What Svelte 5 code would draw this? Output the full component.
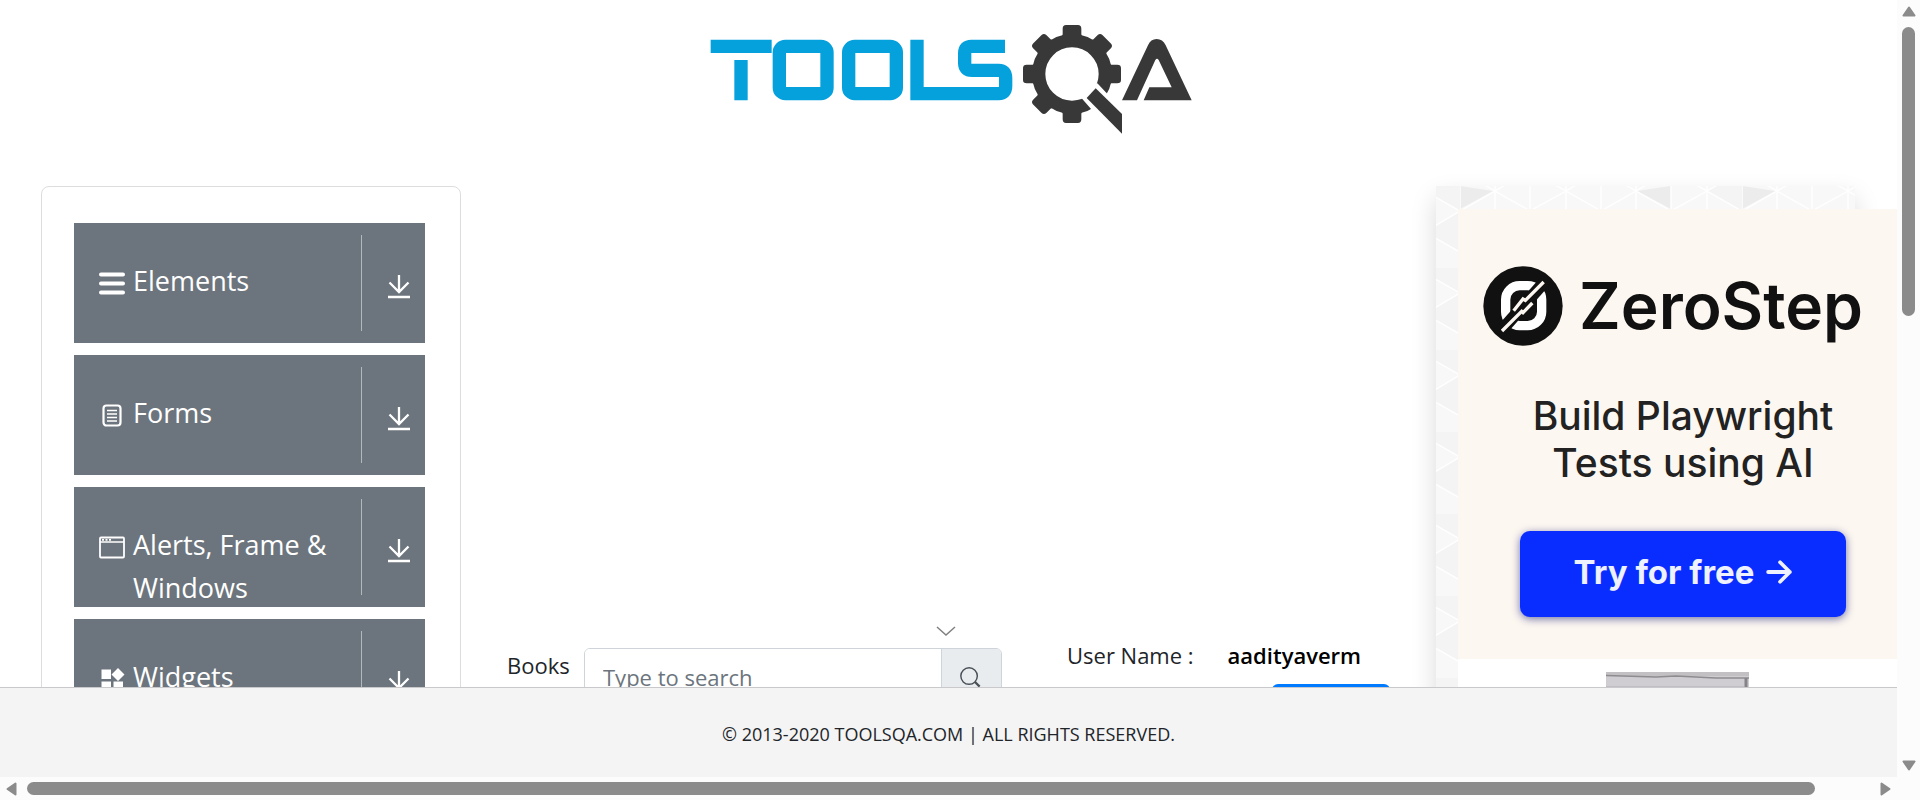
<script>
  const groups = [
    { icon: 'menu', label: 'Elements' },
    { icon: 'form', label: 'Forms' },
    { icon: 'window', label: 'Alerts, Frame & Windows' },
    { icon: 'widgets', label: 'Widgets' },
  ];
  const teeth = [0, 45, 90, 180, 225, 270, 315];
  let query = $state('');
</script>

<div class="shell">
  <div class="page">
    <header>
      <a href="#home" aria-label="TOOLSQA">
        <svg class="logo" viewBox="0 0 1560 420">
          <g fill="none" stroke="#05a1dd" stroke-width="40">
            <path d="M62 109H245M153 150V271" />
            <rect x="268" y="109" width="143" height="142" rx="18" />
            <rect x="476" y="109" width="143" height="142" rx="18" />
            <path d="M945 109H844Q824 109 824 129V160Q824 181 846 181H926Q947 181 947 204V228Q947 251 926 251H681V89" />
          </g>
          <g fill="#383838">
            <g transform="translate(1146 192)">
              <circle r="100" fill="none" stroke="#383838" stroke-width="40" />
              {#each teeth as angle}
                <path transform="rotate({angle})" d="M-40 -108Q-29 -111 -28 -119V-136Q-28 -147 -18 -147H18Q28 -147 28 -136V-119Q29 -111 40 -108Z" />
              {/each}
            </g>
            <path fill="#fff" d="M1222 220L1290 292L1250 350L1175 265L1190 240Z" />
            <path d="M1217 235L1296 312V371L1190 264Z" />
            <path d="M1296 271L1374 106Q1382 87 1400 87Q1418 87 1427 106L1505 271H1361L1378 232H1445L1406 150Q1401 143 1396 150L1341 271Z" />
          </g>
        </svg>
      </a>
    </header>

    <main>
      <nav>
        {#each groups as group}
          <button class="group">
            <span class="group-icon">
              <svg viewBox="0 0 26 26" fill="none" stroke="#fff">
                {#if group.icon === 'menu'}
                  <path d="M2 3.500H24M2 12.500H24M2 21.500H24" stroke-width="4" stroke-linecap="round" />
                {:else if group.icon === 'form'}
                  <rect x="4.500" y="2.500" width="17" height="20" rx="3" stroke-width="2.200" />
                  <path d="M8 7.500H18M8 11H18M8 14.500H18M8 18H18" stroke-width="1.300" />
                {:else if group.icon === 'window'}
                  <rect x="1" y="2.500" width="24" height="20" rx="1" stroke-width="1.800" />
                  <path d="M1 7H25" stroke-width="1.500" />
                  <path d="M3 4.800H13" stroke-width="1.800" stroke-dasharray="2 1.500" />
                {:else}
                  <path d="M2.500 2.500H12V12H2.500ZM2.500 14.500H12V24H2.500ZM14.500 14.500H24V24H14.500ZM19 1L25.500 7.500L19 14L12.500 7.500Z" fill="#fff" stroke="none" />
                {/if}
              </svg>
            </span>
            <span class="group-label">{group.label}</span>
            <span class="group-toggle">
              <svg viewBox="0 0 24 26" fill="none" stroke="#fff" stroke-width="2.300">
                <path d="M12 1V18M2.500 8.500L12 18L21.500 8.500M1 23H23" />
              </svg>
            </span>
          </button>
        {/each}
      </nav>

      <section class="content">
        <div class="books">
          <svg class="chevron" viewBox="0 0 20 10" fill="none" stroke="#808080" stroke-width="1.500">
            <path d="M1 1L10 9L19 1" />
          </svg>
          <div class="search-row">
            <label for="search">Books</label>
            <div class="search">
              <input id="search" type="text" placeholder="Type to search" bind:value={query} />
              <button aria-label="Type to search">
                <svg viewBox="0 0 24 24" fill="none" stroke="#495057" stroke-width="1.600">
                  <circle cx="11" cy="11" r="9" />
                  <path d="M17.500 17.500L22.500 22.500" stroke-width="2.500" />
                </svg>
              </button>
            </div>
          </div>
        </div>
        <div class="user">
          <div class="user-row">
            <span>User Name :</span>
            <strong>aadityaverm</strong>
          </div>
          <button class="primary"></button>
        </div>
      </section>

      <aside>
        <svg class="pattern" width="100%" height="100%" aria-hidden="true">
          <defs>
            <pattern id="facets" x="24" y="0" width="282" height="82" patternUnits="userSpaceOnUse">
              <rect width="282" height="82" fill="#f8f8f8" />
              <path d="M0 0L33 5L0 23ZM211 0V23L177 5Z" fill="#ececec" />
              <path d="M247 5L282 -15V25ZM247 46L282 26V66Z" fill="#f4f4f4" />
              <g stroke="#fff" stroke-width="1.500" fill="none">
                <path d="M0 0V82M35 0V82M70 0V82M106 0V82M141 0V82M176 0V82M211 0V82M247 0V82" />
                <path d="M0 25L35 5L70 25L106 5L141 25L176 5L211 25L247 5L282 25M0 -15L35 5L70 -15L106 5L141 -15L176 5L211 -15L247 5L282 -15" />
                <path d="M0 66L35 46L70 66L106 46L141 66L176 46L211 66L247 46L282 66M0 25L35 46L70 25L106 46L141 25L176 46L211 25L247 46L282 25" />
              </g>
            </pattern>
          </defs>
          <rect width="100%" height="100%" fill="url(#facets)" />
        </svg>
        <div class="ads">
          <article class="ad">
            <div class="brand">
              <svg viewBox="38 50 240 240">
                <circle cx="158" cy="170" r="119" fill="#111" />
                <rect x="106" y="109" width="108" height="120" rx="42" fill="none" stroke="#fff" stroke-width="28" />
                <path d="M84 254L230 89" stroke="#111" stroke-width="36" />
                <path d="M95 245L154 186L158 190L186 161M220 98L165 153L158 149L130 184" fill="none" stroke="#fdf7f1" stroke-width="10" />
              </svg>
              <span>ZeroStep</span>
            </div>
            <p>Build Playwright<br />Tests using AI</p>
            <a class="cta" href="#try">
              Try for free
              <svg viewBox="0 0 24 24" fill="none" stroke="#eef1ff" stroke-width="3.500" stroke-linecap="round" stroke-linejoin="round">
                <path d="M2 12H22M13 3L22 12L13 21" />
              </svg>
            </a>
          </article>
          <svg class="poster" viewBox="0 0 143 120">
            <rect width="143" height="120" fill="#cfccd2" />
            <path d="M0 0H143V4H0Z" fill="#c2c0c3" />
            <path d="M0 3.500L50 5L70 4L110 6L143 6" fill="none" stroke="#8e8c8f" stroke-width="1.500" />
            <path d="M0 15H138" stroke="#b2afb6" />
            <path d="M140 6V120" stroke="#858387" stroke-width="3" />
          </svg>
        </div>
      </aside>
    </main>
  </div>

  <footer>© 2013-2020 TOOLSQA.COM | ALL RIGHTS RESERVED.</footer>

  <div class="bar vertical">
    <svg viewBox="0 0 14 11"><path d="M7 1.500L12.500 9.500H1.500Z" /></svg>
    <div class="track"><div class="thumb"></div></div>
    <svg viewBox="0 0 14 11"><path d="M7 9.500L12.500 1.500H1.500Z" /></svg>
  </div>
  <div class="bar horizontal">
    <svg viewBox="0 0 11 14"><path d="M1.500 7L9.500 1.500V12.500Z" /></svg>
    <div class="track"><div class="thumb"></div></div>
    <svg viewBox="0 0 11 14"><path d="M9.500 7L1.500 1.500V12.500Z" /></svg>
  </div>
</div>

<style>
  * {
    box-sizing: border-box;
  }
  svg {
    display: block;
  }
  button {
    font: inherit;
    border: 0;
    padding: 0;
    cursor: pointer;
  }
  .shell {
    display: grid;
    grid-template-columns: minmax(0, 1fr) 23px;
    grid-template-rows: minmax(0, 1fr) auto 23px;
    height: 100vh;
    background: #fff;
    color: #212529;
    font: 22px/36px 'Open Sans', 'Noto Sans', sans-serif;
  }
  .page {
    overflow: hidden;
  }
  header {
    display: flex;
    justify-content: center;
    padding: 10px 0 36px 2px;
  }
  .logo {
    width: 520px;
    height: 140px;
  }
  main {
    display: grid;
    grid-template-columns: minmax(0, 420fr) minmax(0, 975fr) minmax(0, 419fr);
    padding: 0 42px 0 41px;
  }
  nav {
    display: flex;
    flex-direction: column;
    gap: 12px;
    padding: 36px 35px 36px 32px;
    border: 1px solid #ddd;
    border-radius: 8px;
  }
  .group {
    display: grid;
    grid-template-columns: 26px minmax(0, 1fr) 64px;
    grid-template-rows: minmax(0, 1fr);
    column-gap: 8px;
    height: 120px;
    padding: 12px 0 12px 25px;
    background: #6c757d;
    color: #fff;
    font-size: 27px;
    line-height: 43px;
    text-align: left;
  }
  .group-icon {
    padding-top: 36px;
  }
  .group-icon svg {
    width: 26px;
    height: 26px;
  }
  .group-label {
    padding-top: 24px;
  }
  .group-toggle {
    display: flex;
    justify-content: center;
    padding: 39px 0 0 10px;
    border-left: 1px solid #b4b8bc;
  }
  .group-toggle svg {
    width: 24px;
    height: 26px;
  }
  .content {
    display: grid;
    grid-template-columns: minmax(0, 495fr) minmax(0, 323fr);
    column-gap: 65px;
    align-content: start;
    padding: 440px 46px 0;
  }
  .chevron {
    width: 20px;
    height: 10px;
    margin: 0 46px 12px auto;
  }
  .search-row {
    display: flex;
    gap: 12px;
  }
  label {
    min-width: 65px;
    line-height: 34px;
  }
  .search {
    display: flex;
    flex: 1;
    min-width: 0;
    height: 57px;
    border: 1px solid #ced4da;
    border-radius: 6px;
    overflow: hidden;
  }
  input {
    flex: 1;
    min-width: 0;
    padding: 0 18px;
    border: 0;
    background: #fff;
    color: #495057;
    font: inherit;
  }
  input::placeholder {
    color: #6c757d;
    opacity: 1;
  }
  .search button {
    display: grid;
    place-items: center;
    width: 60px;
    padding-right: 4px;
    border-left: 1px solid #ced4da;
    background: #e9ecef;
  }
  .search button svg {
    width: 22px;
    height: 22px;
  }
  .user {
    padding-top: 11px;
  }
  .user-row {
    display: flex;
    gap: 34px;
    white-space: nowrap;
  }
  strong {
    color: #000;
    font-weight: 600;
  }
  .primary {
    display: block;
    width: 118px;
    height: 57px;
    margin: 11px 0 0 205px;
    border-radius: 6px;
    background: #007bff;
  }
  aside {
    position: relative;
    padding: 23px 0 0 22px;
    box-shadow: 0 12px 24px rgba(0, 0, 0, 0.15);
    background: #f8f8f8;
  }
  .pattern {
    position: absolute;
    inset: 0;
  }
  .ads {
    position: relative;
    width: 450px;
    background: #fff;
    font-family: Inter, sans-serif;
  }
  .ad {
    display: flex;
    flex-direction: column;
    align-items: center;
    height: 450px;
    padding-top: 57px;
    background: #fdf7f1;
  }
  .brand {
    display: flex;
    align-items: center;
    gap: 16px;
    padding-right: 20px;
    color: #111;
    font-size: 64px;
    font-weight: 600;
    line-height: 80px;
  }
  .brand svg {
    width: 80px;
    height: 80px;
  }
  .ad p {
    margin: 46px 0 45px;
    color: #222;
    font-size: 39px;
    font-weight: 500;
    line-height: 47px;
    text-align: center;
  }
  .cta {
    display: flex;
    align-items: center;
    justify-content: center;
    gap: 12px;
    width: 326px;
    height: 86px;
    padding-bottom: 4px;
    border-radius: 10px;
    background: #0a2dff;
    box-shadow: 0 2px 8px rgba(20, 30, 120, 0.6);
    color: #eef1ff;
    font-size: 33px;
    font-weight: 700;
    text-decoration: none;
  }
  .cta svg {
    width: 26px;
    height: 26px;
  }
  .poster {
    width: 143px;
    height: 120px;
    margin: 13px 0 0 148px;
  }
  footer {
    grid-column: 1;
    padding: 28px 0 25px;
    border-top: 1px solid #c9c9cb;
    background: #f4f4f4;
    font-size: 18px;
    text-align: center;
  }
  .bar {
    display: flex;
    align-items: center;
    gap: 10px;
    background: #fcfcfc;
  }
  .bar path {
    fill: #8b8b8b;
    stroke: #8b8b8b;
    stroke-width: 2;
    stroke-linejoin: round;
  }
  .vertical {
    grid-area: 1 / 2 / 3 / 3;
    flex-direction: column;
    padding: 6px 0;
  }
  .vertical svg {
    width: 14px;
    height: 11px;
  }
  .horizontal {
    grid-area: 3 / 1 / 4 / 3;
    padding: 0 29px 0 6px;
  }
  .horizontal svg {
    width: 11px;
    height: 14px;
  }
  .track {
    flex: 1;
  }
  .thumb {
    border-radius: 7px;
    background: #8b8b8b;
  }
  .vertical .thumb {
    width: 13px;
    height: 40%;
  }
  .horizontal .thumb {
    width: 97%;
    height: 13px;
  }
</style>
